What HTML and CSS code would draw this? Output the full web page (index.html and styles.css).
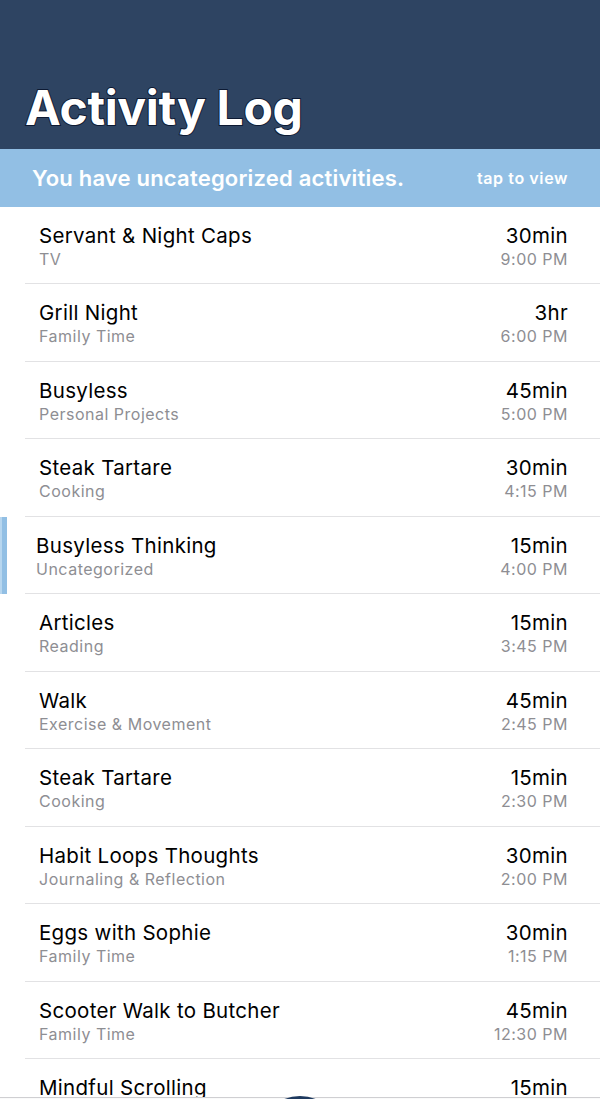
FILE: index.html
```html
<!DOCTYPE html>
<html>
<head>
<meta charset="utf-8">
<link rel="stylesheet" href="styles.css">
</head>
<body>
<div class="screen">
  <header class="header"><h1 class="title">Activity Log</h1></header>
  <div class="banner">
    <span class="banner-text">You have uncategorized activities.</span>
    <span class="banner-link">tap to view</span>
  </div>
  <ul class="list">
    <li class="row"><div class="left"><div class="name">Servant &amp; Night Caps</div><div class="cat">TV</div></div><div class="right"><div class="dur">30min</div><div class="time">9:00 PM</div></div></li>
    <li class="row"><div class="left"><div class="name">Grill Night</div><div class="cat">Family Time</div></div><div class="right"><div class="dur">3hr</div><div class="time">6:00 PM</div></div></li>
    <li class="row"><div class="left"><div class="name">Busyless</div><div class="cat">Personal Projects</div></div><div class="right"><div class="dur">45min</div><div class="time">5:00 PM</div></div></li>
    <li class="row"><div class="left"><div class="name">Steak Tartare</div><div class="cat">Cooking</div></div><div class="right"><div class="dur">30min</div><div class="time">4:15 PM</div></div></li>
    <li class="row row-uncat"><span class="marker"></span><div class="left"><div class="name">Busyless Thinking</div><div class="cat">Uncategorized</div></div><div class="right"><div class="dur">15min</div><div class="time">4:00 PM</div></div></li>
    <li class="row"><div class="left"><div class="name">Articles</div><div class="cat">Reading</div></div><div class="right"><div class="dur">15min</div><div class="time">3:45 PM</div></div></li>
    <li class="row"><div class="left"><div class="name">Walk</div><div class="cat">Exercise &amp; Movement</div></div><div class="right"><div class="dur">45min</div><div class="time">2:45 PM</div></div></li>
    <li class="row"><div class="left"><div class="name">Steak Tartare</div><div class="cat">Cooking</div></div><div class="right"><div class="dur">15min</div><div class="time">2:30 PM</div></div></li>
    <li class="row"><div class="left"><div class="name">Habit Loops Thoughts</div><div class="cat">Journaling &amp; Reflection</div></div><div class="right"><div class="dur">30min</div><div class="time">2:00 PM</div></div></li>
    <li class="row"><div class="left"><div class="name">Eggs with Sophie</div><div class="cat">Family Time</div></div><div class="right"><div class="dur">30min</div><div class="time">1:15 PM</div></div></li>
    <li class="row"><div class="left"><div class="name">Scooter Walk to Butcher</div><div class="cat">Family Time</div></div><div class="right"><div class="dur">45min</div><div class="time">12:30 PM</div></div></li>
    <li class="row"><div class="left"><div class="name">Mindful Scrolling</div><div class="cat">Social Media</div></div><div class="right"><div class="dur">15min</div><div class="time">12:00 PM</div></div></li>
  </ul>
  <div class="tabbar"><span class="fab"></span></div>
</div>
</body>
</html>
```
FILE: styles.css
```css
* { box-sizing: border-box; }
html, body { margin: 0; padding: 0; background: #ffffff; }
body { font-family: "Inter", "Roboto", "Liberation Sans", sans-serif; }
.screen { position: relative; width: 600px; height: 1099px; overflow: hidden; background: #fff; }
.header {
  height: 149px;
  background: #2e4462;
  display: flex;
  align-items: flex-end;
  padding: 0 0 17px 25px;
}
.title {
  margin: 0;
  color: #ffffff;
  font-size: 48px;
  font-weight: 700;
  line-height: 1;
  letter-spacing: -0.3px;
  -webkit-text-stroke: 2px #0d1a33;
  paint-order: stroke fill;
}
.banner {
  height: 57.5px;
  background: #92bfe4;
  display: flex;
  align-items: center;
  justify-content: space-between;
  padding: 0 32px 0 32px;
  color: #ffffff;
  font-weight: 600;
}
.banner-text { font-size: 22px; letter-spacing: 0.2px; }
.banner-link { font-size: 16px; letter-spacing: 0.6px; }
.list { list-style: none; margin: 0; padding: 0; }
.row {
  position: relative;
  height: 77.5px;
  margin-left: 25px;
  padding: 3px 32px 0 14px;
  border-bottom: 1px solid #e2e2e4;
  display: flex;
  align-items: center;
  justify-content: space-between;
}
.row-uncat { padding-left: 11px; }
.marker {
  position: absolute;
  left: -25px;
  top: 0;
  width: 7px;
  height: 77px;
  background: #92bfe4;
  border-left: 2px solid #b7d6ef;
}
.left, .right { display: flex; flex-direction: column; gap: 1px; }
.right { align-items: flex-end; }
.name, .dur { font-size: 20.5px; color: #000000; line-height: 24px; letter-spacing: 0.3px; }
.cat, .time { font-size: 16px; color: #8e8e93; line-height: 20px; letter-spacing: 0.5px; }
.tabbar {
  position: absolute;
  left: 0;
  right: 0;
  top: 1097px;
  height: 60px;
  background: #fafafa;
  border-top: 1px solid #cfcfd2;
}
.fab {
  position: absolute;
  left: 258px;
  top: -2px;
  width: 84px;
  height: 84px;
  border-radius: 50%;
  background: #1e3a5f;
}
```
